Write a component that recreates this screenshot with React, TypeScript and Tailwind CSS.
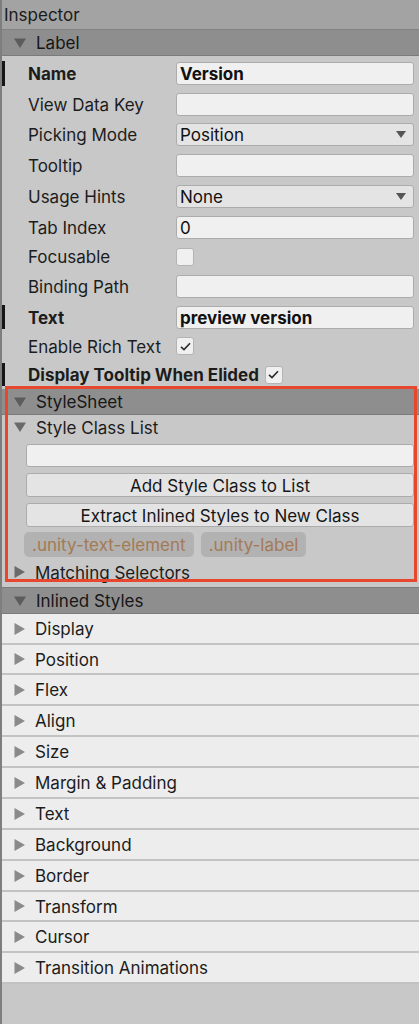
import React from "react";

function TriDown({ className = "" }: { className?: string }) {
  return (
    <svg width="12" height="10" viewBox="0 0 12 10" className={className}>
      <path d="M0 0.5 L12 0.5 L6 10 Z" fill="currentColor" />
    </svg>
  );
}

function TriRight({ className = "" }: { className?: string }) {
  return (
    <svg width="11" height="12" viewBox="0 0 11 12" className={className}>
      <path d="M0.5 0 L11 6 L0.5 12 Z" fill="currentColor" />
    </svg>
  );
}

function Check() {
  return (
    <svg width="11" height="9" viewBox="0 0 11 9">
      <path d="M1 4.8 L4 7.6 L10 1.2" fill="none" stroke="#2b2b2b" strokeWidth="1.6" />
    </svg>
  );
}

function Checkbox({ checked }: { checked?: boolean }) {
  return (
    <div className="w-[18px] h-[18px] rounded-[3px] bg-[#f0f0f0] border border-[#b4b4b4] flex items-center justify-center">
      {checked && <Check />}
    </div>
  );
}

// text sits ~1px lower than Inter's natural box centre in the editor
function Txt({ children, className = "" }: { children: React.ReactNode; className?: string }) {
  return <span className={"pt-[2px] whitespace-nowrap " + className}>{children}</span>;
}

function TextField({ value, bold }: { value?: string; bold?: boolean }) {
  return (
    <div
      className={
        "flex-1 h-[23px] rounded-[3px] bg-[#f0f0f0] border border-[#acacac] flex items-center px-[3px] text-[#111]" +
        (bold ? " font-bold" : "")
      }
    >
      {value && <Txt>{value}</Txt>}
    </div>
  );
}

function Dropdown({ value }: { value: string }) {
  return (
    <div className="flex-1 h-[23px] rounded-[3px] bg-[#e4e4e4] border border-[#acacac] flex items-center justify-between pl-[3px] pr-[7px] text-[#111]">
      <Txt>{value}</Txt>
      <svg width="10" height="7" viewBox="0 0 10 7">
        <path d="M0 0 L10 0 L5 7 Z" fill="#555" />
      </svg>
    </div>
  );
}

function Row({
  label,
  bold,
  marked,
  h,
  wide = true,
  children,
}: {
  label: string;
  bold?: boolean;
  marked?: boolean;
  h: string;
  wide?: boolean;
  children?: React.ReactNode;
}) {
  return (
    <div className={"flex items-center pr-[5px] " + h}>
      <div className={"w-[3px] self-stretch my-[3px] " + (marked ? "bg-[#161616]" : "")} />
      <div
        className={
          (wide ? "w-[171px] " : "pr-[6px] ") +
          "pl-[23px] pt-[2px] whitespace-nowrap text-[#1c1c1c]" +
          (bold ? " font-bold" : "")
        }
      >
        {label}
      </div>
      {children}
    </div>
  );
}

function SectionHeader({ title }: { title: string }) {
  return (
    <div className="h-[26px] bg-[#8e8e8e] border-b border-[#7b7b7b] flex items-center pl-[12px] gap-[10px] text-[#161616]">
      <TriDown className="text-[#5c5c5c]" />
      <Txt>{title}</Txt>
    </div>
  );
}

const foldouts = [
  { name: "Display", h: "h-[31px]" },
  { name: "Position", h: "h-[30px]" },
  { name: "Flex", h: "h-[31px]" },
  { name: "Align", h: "h-[31px]" },
  { name: "Size", h: "h-[31px]" },
  { name: "Margin & Padding", h: "h-[31px]" },
  { name: "Text", h: "h-[31px]" },
  { name: "Background", h: "h-[31px]" },
  { name: "Border", h: "h-[31px]" },
  { name: "Transform", h: "h-[30px]" },
  { name: "Cursor", h: "h-[31px]" },
  { name: "Transition Animations", h: "h-[31px]" },
];

export default function App() {
  return (
    <div className="relative w-[419px] h-[1024px] overflow-hidden bg-[#c8c8c8] border-l-2 border-[#7e7e7e] font-['Inter',sans-serif] text-[17px] leading-none">
      {/* window title */}
      <div className="h-[30px] bg-[#a3a3a3] border-b border-[#828282] flex items-center pl-[2px] text-[#1a1a1a]">
        <Txt>Inspector</Txt>
      </div>

      <SectionHeader title="Label" />

      <div className="pt-[2px]">
        <Row label="Name" bold marked h="h-[31px]">
          <TextField value="Version" bold />
        </Row>
        <Row label="View Data Key" h="h-[30px]">
          <TextField />
        </Row>
        <Row label="Picking Mode" h="h-[31px]">
          <Dropdown value="Position" />
        </Row>
        <Row label="Tooltip" h="h-[31px]">
          <TextField />
        </Row>
        <Row label="Usage Hints" h="h-[31px]">
          <Dropdown value="None" />
        </Row>
        <Row label="Tab Index" h="h-[31px]">
          <TextField value="0" />
        </Row>
        <Row label="Focusable" h="h-[27px]">
          <Checkbox />
        </Row>
        <Row label="Binding Path" h="h-[32px]">
          <TextField />
        </Row>
        <Row label="Text" bold marked h="h-[30px]">
          <TextField value="preview version" bold />
        </Row>
        <Row label="Enable Rich Text" h="h-[28px]">
          <Checkbox checked />
        </Row>
        <Row label="Display Tooltip When Elided" bold marked wide={false} h="h-[29px]">
          <Checkbox checked />
        </Row>
      </div>

      {/* StyleSheet */}
      <div>
        <SectionHeader title="StyleSheet" />
        <div className="h-[24px] flex items-center pl-[12px] gap-[10px] text-[#1c1c1c]">
          <TriDown className="text-[#6a6a6a]" />
          <Txt>Style Class List</Txt>
        </div>
        <div className="pl-[24px] pr-[5px] pt-[5px] flex flex-col gap-[6px]">
          <div className="h-[23px] rounded-[3px] bg-[#f0f0f0] border border-[#acacac]" />
          <div className="h-[24px] rounded-[3px] bg-[#e4e4e4] border border-[#acacac] flex items-center justify-center text-[#161616]">
            <Txt>Add Style Class to List</Txt>
          </div>
          <div className="h-[24px] rounded-[3px] bg-[#e4e4e4] border border-[#acacac] flex items-center justify-center text-[#161616]">
            <Txt>Extract Inlined Styles to New Class</Txt>
          </div>
        </div>
        <div className="flex gap-[7px] pl-[22px] pt-[5px]">
          <div className="h-[25px] px-[8px] rounded-[5px] bg-[#b2b2b2] flex items-center text-[#a47a55]">
            <Txt>.unity-text-element</Txt>
          </div>
          <div className="h-[25px] px-[8px] rounded-[5px] bg-[#b2b2b2] flex items-center text-[#a47a55]">
            <Txt>.unity-label</Txt>
          </div>
        </div>
        <div className="h-[30px] flex items-center pl-[12px] gap-[10px] text-[#1c1c1c]">
          <TriRight className="text-[#6a6a6a]" />
          <Txt>Matching Selectors</Txt>
        </div>
      </div>

      {/* Inlined Styles */}
      <div className="border-t border-[#7b7b7b]">
        <SectionHeader title="Inlined Styles" />
        {foldouts.map((f) => (
          <div
            key={f.name}
            className={"bg-[#ededed] border-b-2 border-[#c3c3c3] flex items-center pl-[12px] gap-[10px] text-[#1c1c1c] " + f.h}
          >
            <TriRight className="text-[#8a8a8a]" />
            <Txt>{f.name}</Txt>
          </div>
        ))}
      </div>

      {/* annotation highlight */}
      <div className="absolute left-[3px] top-[386px] w-[412px] h-[196px] border-[3px] border-[#e6472e] pointer-events-none" />
    </div>
  );
}
